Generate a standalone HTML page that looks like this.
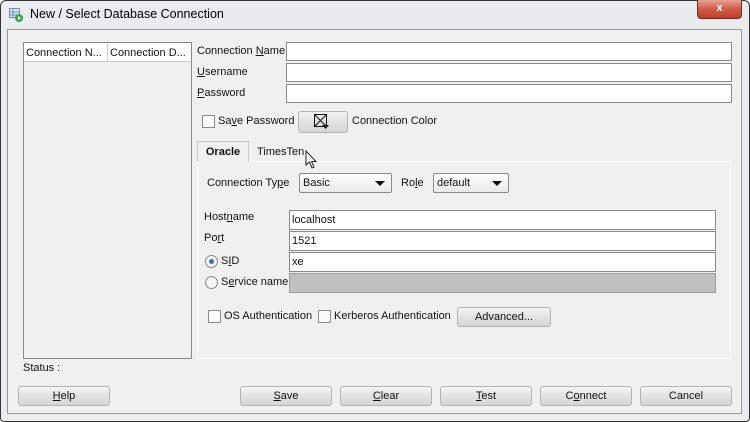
<!DOCTYPE html>
<html><head><style>
*{box-sizing:border-box;margin:0;padding:0}
body{width:750px;height:422px;overflow:hidden;background:#fff;font-family:"Liberation Sans",sans-serif;font-size:11px;color:#111}
.a{position:absolute}
.win{left:0;top:0;width:750px;height:422px;border:1px solid #333;border-radius:6px 6px 4px 4px;background:#e9ebee}
.in{left:7px;top:29px;width:735px;height:385px;border:1px solid #999;background:#f0f0f0}
.fld{background:#fff;border:1px solid #8a8a8a;height:20px;padding:3px 2px;font-size:11px}
.btn{height:20px;border:1px solid #b5b5b5;border-radius:3px;background:linear-gradient(#f4f4f4,#e2e2e2 50%,#d6d6d6);text-align:center;line-height:18px;font-size:11px}
.cb{width:13px;height:13px;border:1px solid #8a8a8a;background:#fafafa}
.sel{height:20px;border:1px solid #8a8a8a;border-radius:2px;background:linear-gradient(#fff,#eaeaea);padding:3px 3px;font-size:11px}
.sel:after{content:"";position:absolute;right:6px;top:7px;border-left:5px solid transparent;border-right:5px solid transparent;border-top:5px solid #111}
.rad{width:13px;height:13px;border:1px solid #888;border-radius:50%;background:#f6f6f6}
u{text-decoration:underline}
</style></head><body>
<div class="a win"></div>
<svg class="a" style="left:9px;top:8px" width="14" height="14"><rect x="0" y="0" width="11" height="10" fill="#6d8fc4"/><rect x="1" y="1" width="9" height="8" fill="#dbe6f6"/><line x1="1" y1="4" x2="10" y2="4" stroke="#6d8fc4"/><line x1="1" y1="7" x2="10" y2="7" stroke="#6d8fc4"/><line x1="4" y1="1" x2="4" y2="10" stroke="#6d8fc4"/><circle cx="10" cy="10" r="4" fill="#2fa84a"/><path d="M9 8 L12 10 L9 12Z" fill="#fff"/></svg>
<div class="a" style="left:30px;top:7px;font-size:12.5px;color:#000">New / Select Database Connection</div>
<div class="a" style="left:697px;top:0;width:45px;height:19px;border:1px solid #7a2a20;border-top:none;border-radius:0 0 4px 4px;background:linear-gradient(#e8a393,#d25a45 50%,#c0402c);color:#fff;text-align:center;font-weight:bold;font-size:11px;line-height:17px">x</div>
<div class="a in"></div>
<div class="a" style="left:23px;top:42px;width:169px;height:317px;border:1px solid #888;background:#f0f0f0"></div>
<div class="a" style="left:24px;top:43px;width:84px;height:19px;border-right:1px solid #ccc;border-bottom:1px solid #ccc;background:#fff;padding:4px 2px;font-size:11px;white-space:nowrap;overflow:hidden">Connection N...</div>
<div class="a" style="left:108px;top:43px;width:83px;height:19px;border-bottom:1px solid #ccc;background:#fff;padding:4px 2px;font-size:11px;white-space:nowrap;overflow:hidden">Connection D...</div>
<div class="a" style="left:197px;top:45px">Connection <u>N</u>ame</div>
<div class="a" style="left:197px;top:66px"><u>U</u>sername</div>
<div class="a" style="left:197px;top:87px"><u>P</u>assword</div>
<div class="a fld" style="left:286px;top:42px;width:446px;height:19px"></div>
<div class="a fld" style="left:286px;top:63px;width:446px;height:19px"></div>
<div class="a fld" style="left:286px;top:84px;width:446px;height:19px"></div>
<div class="a cb" style="left:202px;top:115px"></div>
<div class="a" style="left:218px;top:115px">Sa<u>v</u>e Password</div>
<div class="a btn" style="left:298px;top:111px;width:50px;height:22px"></div>
<svg class="a" style="left:314px;top:114px" width="16" height="16"><rect x="0.5" y="0.5" width="12" height="12" fill="none" stroke="#111"/><line x1="0" y1="0" x2="13" y2="13" stroke="#111"/><line x1="13" y1="0" x2="0" y2="13" stroke="#111"/><path d="M8 11 L15 11 L11.5 15Z" fill="#111"/></svg>
<div class="a" style="left:352px;top:115px">Connection Color</div>
<div class="a" style="left:197px;top:161px;width:534px;height:198px;border:1px solid #fff;background:#f0f0f0"></div>
<div class="a" style="left:197px;top:141px;width:52px;height:21px;border:1px solid #c8c8c8;border-bottom:none;background:#f0f0f0;font-weight:bold;text-align:center;line-height:21px">Oracle</div>
<div class="a" style="left:257px;top:146px">TimesTen</div>
<svg class="a" style="left:305px;top:150px" width="14" height="20"><path d="M1 1 L1 15 L4.5 12 L7 18 L9 17 L6.5 11.5 L11 11.5Z" fill="#fff" stroke="#222" stroke-width="1"/></svg>
<div class="a" style="left:207px;top:177px">Connection Ty<u>p</u>e</div>
<div class="a sel" style="left:299px;top:173px;width:93px">Basic</div>
<div class="a" style="left:401px;top:177px">Ro<u>l</u>e</div>
<div class="a sel" style="left:433px;top:173px;width:76px">default</div>
<div class="a" style="left:204px;top:211px">Host<u>n</u>ame</div>
<div class="a" style="left:204px;top:232px">Po<u>r</u>t</div>
<div class="a rad" style="left:205px;top:255px"><div style="width:5px;height:5px;border-radius:50%;background:#3c6fc4;margin:3px"></div></div>
<div class="a" style="left:221px;top:255px">S<u>I</u>D</div>
<div class="a rad" style="left:205px;top:276px"></div>
<div class="a" style="left:221px;top:276px">S<u>e</u>rvice name</div>
<div class="a fld" style="left:289px;top:210px;width:427px">localhost</div>
<div class="a fld" style="left:289px;top:231px;width:427px">1521</div>
<div class="a fld" style="left:289px;top:252px;width:427px">xe</div>
<div class="a fld" style="left:289px;top:273px;width:427px;background:#c0c0c0;border-color:#9a9a9a"></div>
<div class="a cb" style="left:208px;top:310px"></div>
<div class="a" style="left:224px;top:310px">OS Authentication</div>
<div class="a cb" style="left:318px;top:310px"></div>
<div class="a" style="left:334px;top:310px">Kerberos Authentication</div>
<div class="a btn" style="left:457px;top:307px;width:94px">Advanced...</div>
<div class="a" style="left:23px;top:362px">Status :</div>
<div class="a btn" style="left:18px;top:386px;width:92px"><u>H</u>elp</div>
<div class="a btn" style="left:240px;top:386px;width:92px"><u>S</u>ave</div>
<div class="a btn" style="left:340px;top:386px;width:92px"><u>C</u>lear</div>
<div class="a btn" style="left:440px;top:386px;width:92px"><u>T</u>est</div>
<div class="a btn" style="left:540px;top:386px;width:92px">C<u>o</u>nnect</div>
<div class="a btn" style="left:640px;top:386px;width:92px">Cancel</div>
</body></html>
